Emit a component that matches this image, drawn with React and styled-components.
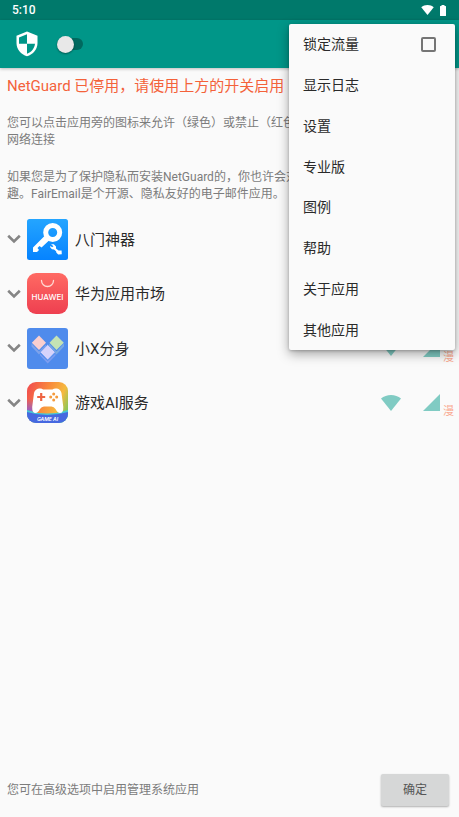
import React, {useState} from 'react';
import styled, {createGlobalStyle} from 'styled-components';

const GlobalStyle = createGlobalStyle`
  * {
    box-sizing: border-box;
  }

  body {
    margin: 0;
    background: #fafafa;
    font-family: Roboto, "Noto Sans CJK SC", sans-serif;
  }

  button, input {
    margin: 0;
    font-family: inherit;
  }
`

const Page = styled.div`
  position: relative;
  display: flex;
  flex-direction: column;
  min-height: 100vh;
  overflow: hidden;
`

const StatusBar = styled.div`
  display: flex;
  align-items: center;
  justify-content: space-between;
  height: 20px;
  padding: 0 13px 0 12px;
  background: #00796b;
  color: #fff;
  font-size: 12px;
  font-weight: 500;
`

const StatusIcons = styled.div`
  display: flex;
  align-items: center;
  gap: 6px;
`

const Toolbar = styled.header`
  display: flex;
  align-items: center;
  gap: 19px;
  height: 48px;
  padding: 0 16px;
  background: #009688;
  box-shadow: 0 1px 3px rgba(0, 0, 0, 0.25);
`

const Switch = styled.input`
  appearance: none;
  display: flex;
  align-items: center;
  width: 26px;
  height: 12px;
  border-radius: 6px;
  background: #00695f;

  &::before {
    content: '';
    width: 17px;
    height: 17px;
    flex-shrink: 0;
    border-radius: 50%;
    background: #e8e8e8;
    box-shadow: 0 1px 2px rgba(0, 0, 0, 0.4);
    transform: translateX(${props => props.checked ? '9px' : '0'});
  }
`

const Content = styled.main`
  flex: 1;
  padding: 8px 5px 0 7px;
`

const Warning = styled.h1`
  margin: 0 0 19px;
  color: #f4623a;
  font-size: 15px;
  font-weight: 400;
  line-height: 20px;
  white-space: nowrap;
`

const Hint = styled.p`
  margin: 0 0 ${props => props.$last ? '9px' : '20px'};
  color: #7c7c7c;
  font-size: 12px;
  line-height: 17px;
  white-space: nowrap;
`

const AppList = styled.ul`
  display: grid;
  grid-auto-rows: 1fr;
  height: 218px;
  margin: 0;
  padding: 0;
  list-style: none;
`

const AppRow = styled.li`
  display: flex;
  align-items: center;
`

const Expander = styled.button`
  display: flex;
  width: 20px;
  padding: 0;
  border: none;
  background: none;
`

const AppName = styled.span`
  flex: 1;
  margin-left: 7px;
  padding-top: 1px;
  color: #2a2a2a;
  font-size: 15px;
  line-height: 20px;
`

const NetworkButton = styled.button`
  display: flex;
  margin-right: 22px;
  padding: 0;
  border: none;
  background: none;
`

const MobileCell = styled.div`
  display: flex;
  align-items: flex-end;
  gap: 3px;

  ${NetworkButton} {
    margin-right: 0;
  }
`

const Roaming = styled.span`
  height: 11px;
  margin-bottom: -6px;
  color: #f9ab93;
  font-size: 11px;
  line-height: 11px;
`

const Footer = styled.footer`
  display: flex;
  align-items: center;
  justify-content: space-between;
  padding: 0 10px 11px 7px;
  color: #7c7c7c;
  font-size: 12px;
  line-height: 16px;
`

const OkButton = styled.button`
  width: 68px;
  height: 32px;
  border: none;
  border-radius: 2px;
  background: #d6d7d7;
  box-shadow: 0 1px 2px rgba(0, 0, 0, 0.3);
  color: #555;
  font-size: 12px;
  line-height: 16px;
`

const Menu = styled.ul`
  position: absolute;
  top: 24px;
  right: 4px;
  display: flex;
  flex-direction: column;
  width: 166px;
  height: 326px;
  margin: 0;
  padding: 0;
  border-radius: 2px;
  background: #fafafa;
  box-shadow: 0 4px 12px rgba(0, 0, 0, 0.35), 0 1px 3px rgba(0, 0, 0, 0.2);
  list-style: none;
`

const MenuItem = styled.li`
  display: flex;
  flex: 1;
  color: #2a2a2a;
  font-size: 14px;
  line-height: 20px;
`

const MenuButton = styled.button`
  flex: 1;
  padding: 0 14px;
  border: none;
  background: none;
  color: inherit;
  font-size: inherit;
  line-height: inherit;
  text-align: left;
`

const MenuLabel = styled.label`
  display: flex;
  flex: 1;
  align-items: center;
  justify-content: space-between;
  padding: 0 19px 0 14px;
`

const Checkbox = styled.input`
  appearance: none;
  width: 15px;
  height: 15px;
  border: 2px solid #757575;
  border-radius: 2px;
  background: ${props => props.checked ? '#009688' : 'transparent'};
`

const ShieldIcon = () => (
    <svg width="22" height="26" viewBox="0 0 22 26">
        <path d="M11 0.500 21.500 4.800V12c0 6.200-4.400 11.400-10.500 13.300C4.900 23.400.5 18.200.5 12V4.800z" fill="#fff"/>
        <path d="M11 3.200V12.800H19c-.5 4.600-3.700 8.600-8 10V12.800H3V6.400z" fill="#009688"/>
    </svg>
)

const WifiIcon = ({width, height, color}) => (
    <svg width={width} height={height} viewBox="0 0 20 16">
        <path d="M10 16 0 3.600C2.800 1.300 6.200 0 10 0s7.200 1.300 10 3.600z" fill={color}/>
    </svg>
)

const BatteryIcon = () => (
    <svg width="6" height="11" viewBox="0 0 6 11">
        <path d="M1.500 1V0h3v1H5.500q.5 0 .5.500v9q0 .5-.5.500h-5q-.5 0-.5-.5v-9Q0 1 .5 1z" fill="#fff"/>
    </svg>
)

const CellIcon = () => (
    <svg width="17" height="17" viewBox="0 0 17 17">
        <path d="M17 0V17H0z" fill="#80cbc3"/>
    </svg>
)

const ChevronIcon = () => (
    <svg width="14" height="10" viewBox="0 0 14 10">
        <path d="M1.200 1.800 7 7.400l5.800-5.600" fill="none" stroke="#858585" strokeWidth="2.600"/>
    </svg>
)

const KeyAppIcon = () => (
    <svg width="41" height="41" viewBox="0 0 41 41">
        <defs>
            <linearGradient id="keyBg" x1="0" y1="0" x2="0" y2="1">
                <stop offset="0" stopColor="#24a5ff"/>
                <stop offset="1" stopColor="#0683ff"/>
            </linearGradient>
        </defs>
        <rect width="41" height="41" rx="2.500" fill="url(#keyBg)"/>
        <circle cx="25.700" cy="13.500" r="7" fill="none" stroke="#fff" strokeWidth="5"/>
        <path d="M17.500 17 22 21.500 14.500 28.500 12.500 27 10.500 29 12 31 10 33H6V28.500z" fill="#fff"/>
        <path
            d="M24 25.200 26.800 25.300 29 27.400 29 29.600 31.500 31.600 34.600 31.500 34.800 35.200 31.200 35.500 29.300 33.600 29.100 32.300 27 30.400 25 30.300 23.300 28.500 23.300 26.800 25 28.200 26.500 27.200z"
            fill="#fff"
        />
    </svg>
)

const HuaweiAppIcon = () => (
    <svg width="41" height="41" viewBox="0 0 41 41">
        <defs>
            <linearGradient id="huaweiBg" x1="0" y1="0" x2="0" y2="1">
                <stop offset="0" stopColor="#ff6a63"/>
                <stop offset="1" stopColor="#ee3f50"/>
            </linearGradient>
        </defs>
        <rect width="41" height="41" rx="9" fill="url(#huaweiBg)"/>
        <path d="M14.500 7.500a6 6 0 0 0 12 0" fill="none" stroke="#ffd9d3" strokeWidth="1.300" strokeLinecap="round"/>
        <text x="20.500" y="26.500" textAnchor="middle" fill="#fff" fontFamily="Inter, sans-serif" fontSize="8" fontWeight="500">
            HUAWEI
        </text>
    </svg>
)

const CloneAppIcon = () => (
    <svg width="41" height="41" viewBox="0 0 41 41">
        <rect width="41" height="41" rx="3" fill="#4f8bec"/>
        <path d="M4.500 15.500 12 23.500 19 16.500V19L12 26.500 4.500 18.500z" fill="#7fa3ea"/>
        <path d="M22 15.500 29.500 23.500 37 15.500V18.500L29.500 26.500 22 19z" fill="#79a9e2"/>
        <path d="M13 25.500 20.700 33 28.500 25.500V27.500L20.700 35.500 13 27.500z" fill="#7c9df0"/>
        <path d="M12 7.500 19 14.700 12 22 4.800 14.700z" fill="#f9cfcf"/>
        <path d="M29.500 7.500 36.800 14.700 29.500 22 22.500 14.700z" fill="#c4e3b4"/>
        <path d="M20.700 16.500 28.200 24.200 20.700 32 13.200 24.200z" fill="#d6d3fb" stroke="#4f8bec" strokeWidth="0.600"/>
    </svg>
)

const GameAppIcon = () => (
    <svg width="41" height="41" viewBox="0 0 41 41">
        <defs>
            <linearGradient id="gameBg" x1="0" y1="0.300" x2="1" y2="0.700">
                <stop offset="0" stopColor="#f2544c"/>
                <stop offset="0.400" stopColor="#f98a3c"/>
                <stop offset="0.750" stopColor="#f5b93f"/>
                <stop offset="1" stopColor="#7cc95c"/>
            </linearGradient>
            <linearGradient id="gameSide" x1="0" y1="0" x2="0" y2="1">
                <stop offset="0.400" stopColor="#8a5bd8" stopOpacity="0"/>
                <stop offset="0.750" stopColor="#8a5bd8"/>
            </linearGradient>
            <clipPath id="gameClip">
                <rect width="41" height="41" rx="9"/>
            </clipPath>
        </defs>
        <g clipPath="url(#gameClip)">
            <rect width="41" height="41" fill="url(#gameBg)"/>
            <path d="M0 0H7L5 41H0z" fill="url(#gameSide)"/>
            <path d="M0 28Q20 35 41 28V41H0z" fill="#45c6d4"/>
            <path d="M0 30Q20 36 41 30V41H0z" fill="#4668e0"/>
            <path
                d="M12 6.500Q15 6 16 7.500H25.500Q27 6 30 6.500 33.500 7 34.500 11L36.300 25Q36.500 31 33 31 30.500 31 28.500 27 27 24.500 24.500 24.500H17Q14.500 24.500 13 27 11 31 8.500 31 5 31 5.200 25L7 11Q8 7 12 6.500z"
                fill="#fff"
            />
            <path d="M14.200 11v8M10.200 15h8" stroke="#ee6544" strokeWidth="2.200"/>
            <g fill="#f49a3c">
                <circle cx="26.700" cy="12" r="1.500"/>
                <circle cx="26.700" cy="18" r="1.500"/>
                <circle cx="23.700" cy="15" r="1.500"/>
                <circle cx="29.700" cy="15" r="1.500"/>
            </g>
            <text x="20.500" y="39" textAnchor="middle" fill="#fff" fontFamily="Inter, sans-serif" fontSize="5" fontWeight="600" fontStyle="italic">
                GAME AI
            </text>
        </g>
    </svg>
)

const apps = [
    {name: '八门神器', Icon: KeyAppIcon},
    {name: '华为应用市场', Icon: HuaweiAppIcon},
    {name: '小X分身', Icon: CloneAppIcon},
    {name: '游戏AI服务', Icon: GameAppIcon},
]

const menuItems = ['显示日志', '设置', '专业版', '图例', '帮助', '关于应用', '其他应用']

const App = () => {
    const [enabled, setEnabled] = useState(false);
    const [locked, setLocked] = useState(false);

    return (
        <Page>
            <GlobalStyle/>
            <StatusBar>
                <span>5:10</span>
                <StatusIcons>
                    <WifiIcon width={13} height={10} color="#fff"/>
                    <BatteryIcon/>
                </StatusIcons>
            </StatusBar>
            <Toolbar>
                <ShieldIcon/>
                <Switch
                    type="checkbox"
                    role="switch"
                    aria-label="NetGuard"
                    checked={enabled}
                    onChange={event => setEnabled(event.target.checked)}
                />
            </Toolbar>
            <Content>
                <Warning>NetGuard 已停用，请使用上方的开关启用</Warning>
                <Hint>
                    您可以点击应用旁的图标来允许（绿色）或禁止（红色<br/>
                    网络连接
                </Hint>
                <Hint $last>
                    如果您是为了保护隐私而安装NetGuard的，你也许会对<br/>
                    趣。FairEmail是个开源、隐私友好的电子邮件应用。
                </Hint>
                <AppList>
                    {apps.map(({name, Icon}) => (
                        <AppRow key={name}>
                            <Expander aria-label={name}>
                                <ChevronIcon/>
                            </Expander>
                            <Icon/>
                            <AppName>{name}</AppName>
                            <NetworkButton aria-label="Wi-Fi">
                                <WifiIcon width={20} height={16} color="#80cbc3"/>
                            </NetworkButton>
                            <MobileCell>
                                <NetworkButton aria-label="移动网络">
                                    <CellIcon/>
                                </NetworkButton>
                                <Roaming>漫</Roaming>
                            </MobileCell>
                        </AppRow>
                    ))}
                </AppList>
            </Content>
            <Footer>
                <span>您可在高级选项中启用管理系统应用</span>
                <OkButton>确定</OkButton>
            </Footer>
            <Menu>
                <MenuItem>
                    <MenuLabel>
                        锁定流量
                        <Checkbox
                            type="checkbox"
                            checked={locked}
                            onChange={event => setLocked(event.target.checked)}
                        />
                    </MenuLabel>
                </MenuItem>
                {menuItems.map(item => (
                    <MenuItem key={item}>
                        <MenuButton>{item}</MenuButton>
                    </MenuItem>
                ))}
            </Menu>
        </Page>
    );
};

export default App;
